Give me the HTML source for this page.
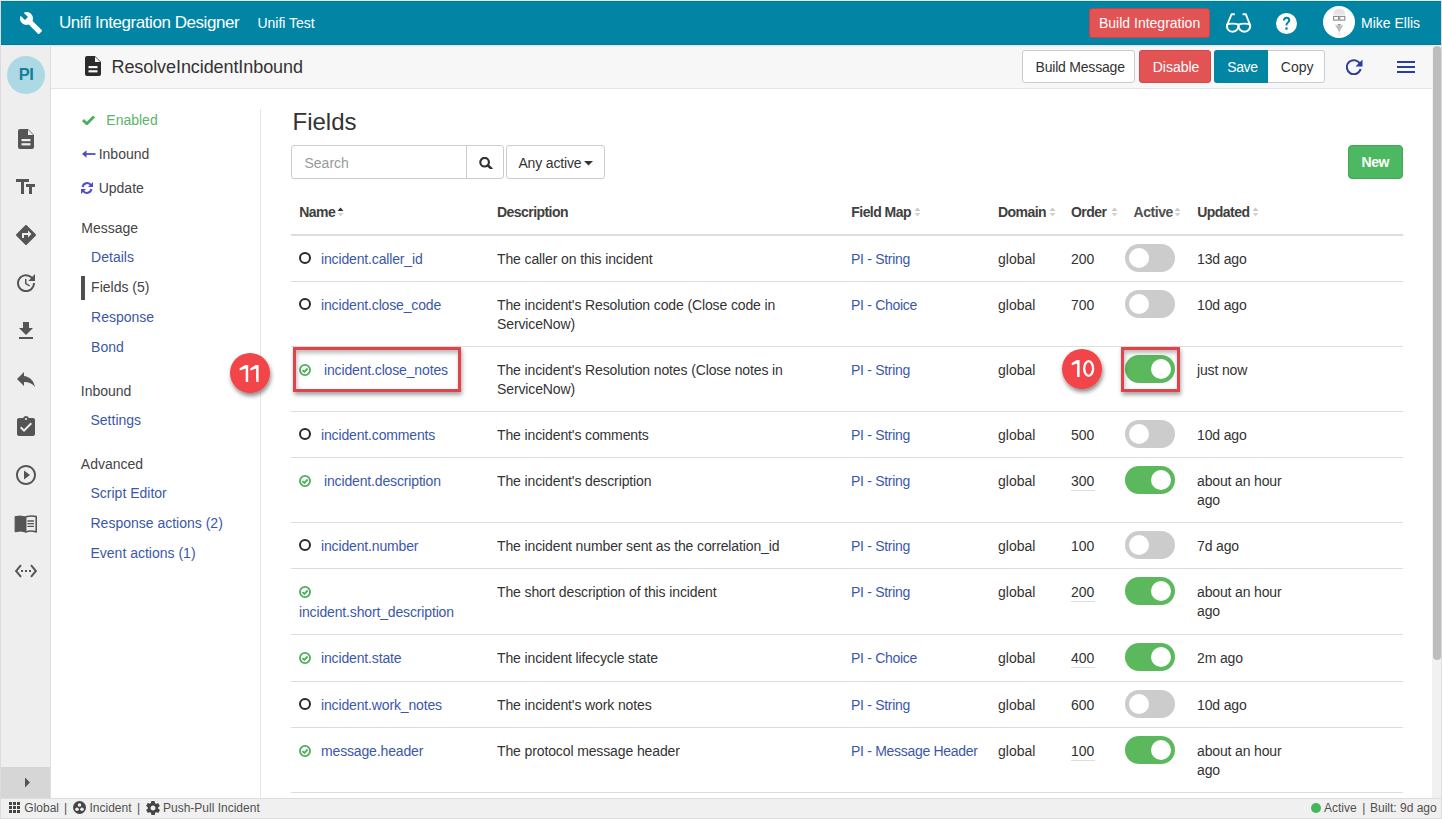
<!DOCTYPE html>
<html><head><meta charset="utf-8"><title>Unifi Integration Designer</title>
<style>
*{box-sizing:border-box;margin:0;padding:0}
html,body{width:1442px;height:819px;overflow:hidden;background:#fff;font-family:"Liberation Sans",sans-serif;color:#333}
body{position:relative}
.a{position:absolute}
.t{position:absolute;line-height:1;white-space:nowrap}
.btn{position:absolute;border-radius:3px}
.tg{position:absolute;width:50px;height:28px;border-radius:14px;background:#cccccc}
.tg.on{background:#5cb85c}
.tg i{position:absolute;top:4px;left:4px;width:20px;height:20px;border-radius:10px;background:#fff}
.tg.on i{left:26px}
.row{position:absolute;left:291px;width:1112px;border-bottom:1px solid #dddddd}
.lnk{color:#3a56a6}
.nl{color:#3f51b5}
</style></head><body>
<div class="a" style="left:0;top:0;width:1442px;height:819px;border:1px solid #dcdcdc;border-top-color:#c4f8fc"></div>
<div class="a" style="left:1px;top:1px;width:1440px;height:44px;background:#0285a5;border-top:1px solid #19708a;border-bottom:1px solid #16718b"></div>
<svg class="a" style="left:19px;top:11px" width="24" height="24" viewBox="0 0 24 24"><path fill="#fff" d="M22.7 19l-9.1-9.1c.9-2.3.4-5-1.5-6.9-2-2-5-2.4-7.4-1.3L9 6 6 9 1.6 4.7C.4 7.1.9 10.1 2.9 12.1c1.9 1.9 4.6 2.4 6.9 1.5l9.1 9.1c.4.4 1 .4 1.4 0l2.3-2.3c.5-.4.5-1.1.1-1.4z"/></svg>
<div class="t " style="left:59.0px;top:13.51px;font-size:17px;color:#fff;letter-spacing:-0.45px">Unifi Integration Designer</div>
<div class="t " style="left:257.4px;top:16.05px;font-size:14px;color:#fff;">Unifi Test</div>
<div class="btn" style="left:1089px;top:8px;width:121px;height:30px;background:#e25353;border:1px solid #c9434a"></div>
<div class="t " style="left:1099.0px;top:15.65px;font-size:14px;color:#fff;">Build Integration</div>
<svg class="a" style="left:1222px;top:10px" width="34" height="26" viewBox="0 0 34 26"><g fill="none" stroke="#fff" stroke-width="1.9" stroke-linejoin="round"><path d="M5 14.6 C7.2 13.3 14 13.3 16.3 14.6 C16.9 18.8 14.4 21.7 10.6 21.7 C6.8 21.7 4.4 18.8 5 14.6Z"/><path d="M16.7 14.6 C19 13.3 25.8 13.3 28.1 14.6 C28.7 18.8 26.2 21.7 22.4 21.7 C18.6 21.7 16.1 18.8 16.7 14.6Z"/><path d="M4.6 16.5 L9.6 4.2 L12.8 4.2"/><path d="M28.6 16.5 L23.8 4.2 L20.6 4.2"/></g></svg>
<svg class="a" style="left:1276px;top:12.5px" width="21" height="21" viewBox="0 0 21 21"><circle cx="10.5" cy="10.5" r="10.5" fill="#fff"/><path d="M6.9 7.6 Q7 3.8 10.7 3.8 Q14.3 3.9 14.3 7.2 Q14.3 9.2 12.2 10.4 Q11.4 10.9 11.4 12.6 H9.4 Q9.4 10.2 10.8 9.2 Q12.2 8.3 12.2 7.2 Q12.2 5.7 10.6 5.7 Q9 5.7 9 7.6Z" fill="#0286a3"/><rect x="9.3" y="14.4" width="2.3" height="2.3" fill="#0286a3"/></svg>
<svg class="a" style="left:1323px;top:6px" width="32" height="32" viewBox="0 0 32 32"><circle cx="16" cy="16" r="16" fill="#fff"/><path d="M10.3 8.8 Q10.5 2.4 16.2 2.4 Q22 2.4 22.1 8.8Z" fill="#e4e4e4"/><rect x="10.6" y="10.4" width="5" height="3.7" fill="none" stroke="#8a8a8a" stroke-width="1.1"/><rect x="16.8" y="10.4" width="5" height="3.7" fill="none" stroke="#8a8a8a" stroke-width="1.1"/><path d="M12 18.5 Q16.2 21 20.4 18.5 L16.2 26.5Z" fill="#bdbdbd"/><path d="M14 18 H18.4 L16.2 20.2Z" fill="#a0a0a0"/><rect x="15.2" y="26" width="2.2" height="4" fill="#ececec"/></svg>
<div class="t " style="left:1361.0px;top:16.15px;font-size:14px;color:#fff;">Mike Ellis</div>
<div class="a" style="left:1px;top:45px;width:50px;height:753px;background:#eeeeee;border-right:1px solid #dedede"></div>
<div class="a" style="left:1px;top:767px;width:49px;height:31px;background:#d6d6d6"></div>
<svg class="a" style="left:24px;top:777px" width="8" height="11" viewBox="0 0 8 11"><path d="M1 0.5 L6 5.5 L1 10.5Z" fill="#555"/></svg>
<div class="a" style="left:7px;top:56px;width:38px;height:38px;border-radius:19px;background:#acd9e3"></div>
<div class="t " style="left:18.7px;top:66.23px;font-size:16.5px;color:#137f9b;font-weight:bold;letter-spacing:-0.5px">PI</div>
<svg class="a" style="left:18px;top:129px" width="16" height="20" viewBox="0 0 16 20"><path d="M2 0 H10 L16 6 V18 Q16 20 14 20 H2 Q0 20 0 18 V2 Q0 0 2 0Z" fill="#555"/><path d="M10 0.8 V6 H15.2Z" fill="#eee"/><rect x="3.5" y="10" width="9" height="2.2" fill="#eee"/><rect x="3.5" y="14.2" width="9" height="2.2" fill="#eee"/></svg>
<svg class="a" style="left:14.2px;top:175px" width="24" height="24" viewBox="0 0 24 24"><path fill="#555" d="M15 4v3h-5v12H7V7H2V4h13zm6 8h-3v7h-3v-7h-3V9h9v3z"/></svg>
<svg class="a" style="left:14px;top:223px" width="24" height="24" viewBox="0 0 24 24"><path fill="#555" d="M21.71 11.29l-9-9c-.39-.39-1.02-.39-1.41 0l-9 9c-.39.39-.39 1.02 0 1.410l9 9c.39.39 1.02.39 1.41 0l9-9c.39-.38.39-1.01 0-1.41zM14 14.5V12h-4v3H8v-4c0-.55.45-1 1-1h5V7.5l3.5 3.5-3.5 3.5z"/></svg>
<svg class="a" style="left:14.1px;top:271px" width="24" height="24" viewBox="0 0 24 24"><path fill="#555" d="M21 10.12h-6.78l2.74-2.82c-2.73-2.7-7.15-2.8-9.88-.1-2.73 2.71-2.73 7.08 0 9.79s7.15 2.71 9.88 0C18.32 15.65 19 14.08 19 12.1h2c0 1.98-.88 4.55-2.640 6.29-3.51 3.48-9.21 3.48-12.72 0-3.5-3.47-3.53-9.11-.02-12.58s9.14-3.47 12.65 0L21 3v7.12zM12.5 8v4.25l3.5 2.08-.72 1.21L11 13V8h1.5z"/></svg>
<svg class="a" style="left:13.8px;top:318.8px" width="24" height="24" viewBox="0 0 24 24"><path fill="#555" d="M19 9h-4V3H9v6H5l7 7 7-7zM5 18v2h14v-2H5z"/></svg>
<svg class="a" style="left:14.1px;top:367.3px" width="24" height="24" viewBox="0 0 24 24"><path fill="#555" d="M10 9V5l-7 7 7 7v-4.1c5 0 8.5 1.6 11 5.1-1-5-4-10-11-11z"/></svg>
<svg class="a" style="left:14.1px;top:415.4px" width="24" height="24" viewBox="0 0 24 24"><path fill="#555" d="M19 3h-4.18C14.4 1.84 13.3 1 12 1c-1.3 0-2.4.84-2.82 2H5c-1.1 0-2 .9-2 2v14c0 1.1.9 2 2 2h14c1.1 0 2-.9 2-2V5c0-1.1-.9-2-2-2zm-7 0c.55 0 1 .45 1 1s-.45 1-1 1-1-.45-1-1 .45-1 1-1zm-2 14l-4-4 1.41-1.41L10 14.17l6.59-6.590L18 9l-8 8z"/></svg>
<svg class="a" style="left:14.3px;top:463.1px" width="24" height="24" viewBox="0 0 24 24"><path fill="#555" d="M10 16.5l6-4.5-6-4.5v9zM12 2C6.48 2 2 6.48 2 12s4.48 10 10 10 10-4.48 10-10S17.52 2 12 2zm0 18c-4.41 0-8-3.59-8-8s3.590-8 8-8 8 3.59 8 8-3.59 8-8 8z"/></svg>
<svg class="a" style="left:12px;top:510px" width="28" height="28" viewBox="0 0 28 28"><path d="M3.1 6.6 Q8.2 5.2 13.6 7 V21.9 Q8.2 20.2 3.1 21.9Z" fill="#555" stroke="#555" stroke-width="1" stroke-linejoin="round"/><path d="M13.6 7 Q19 5.2 24.2 6.6 V21.9 Q19 20.2 13.6 21.9Z" fill="none" stroke="#555" stroke-width="1.6" stroke-linejoin="round"/><path d="M15.4 11 H22 M15.4 13.7 H22 M15.4 16.4 H22" stroke="#555" stroke-width="1.3"/></svg>
<svg class="a" style="left:14px;top:559.1px" width="24" height="24" viewBox="0 0 24 24"><path fill="#555" d="M7.77 6.76L6.23 5.48.82 12l5.41 6.52 1.54-1.28L3.42 12l4.35-5.24zM7 13h2v-2H7v2zm10-2h-2v2h2v-2zm-6 2h2v-2h-2v2zm6.77-7.52l-1.54 1.28L20.58 12l-4.35 5.24 1.54 1.28L23.18 12l-5.41-6.52z"/></svg>
<div class="a" style="left:51px;top:45px;width:1382px;height:44px;background:#f7f7f7;border-bottom:1px solid #e4e4e4"></div>
<div class="a" style="left:1px;top:45px;width:1440px;height:1px;background:#cdeff7"></div>
<div class="a" style="left:51px;top:46px;width:1382px;height:1px;background:#ededed"></div>
<svg class="a" style="left:85px;top:56px" width="16" height="20" viewBox="0 0 16 20"><path d="M2 0 H10 L16 6 V18 Q16 20 14 20 H2 Q0 20 0 18 V2 Q0 0 2 0Z" fill="#2b2b2b"/><path d="M10 0.8 V6 H15.2Z" fill="#f7f7f7"/><rect x="3.5" y="10" width="9" height="2.2" fill="#f7f7f7"/><rect x="3.5" y="14.2" width="9" height="2.2" fill="#f7f7f7"/></svg>
<div class="t " style="left:111.5px;top:57.76px;font-size:18px;color:#333;letter-spacing:-0.08px">ResolveIncidentInbound</div>
<div class="btn" style="left:1022px;top:50px;width:113px;height:33px;background:#fff;border:1px solid #cccccc"></div>
<div class="t " style="left:1035.5px;top:59.85px;font-size:14px;color:#333;letter-spacing:-0.2px">Build Message</div>
<div class="btn" style="left:1139px;top:50px;width:72px;height:33px;background:#e25353;border:1px solid #d24a4f"></div>
<div class="t " style="left:1152.7px;top:59.85px;font-size:14px;color:#fff;">Disable</div>
<div class="btn" style="left:1214px;top:50px;width:111px;height:33px;background:#fff;border:1px solid #cccccc"></div>
<div class="btn" style="left:1214px;top:50px;width:54px;height:33px;background:#0286a3;border-radius:3px 0 0 3px"></div>
<div class="t " style="left:1227.3px;top:59.85px;font-size:14px;color:#fff;letter-spacing:-0.4px">Save</div>
<div class="t " style="left:1280.8px;top:59.85px;font-size:14px;color:#333;">Copy</div>
<svg class="a" style="left:1345.6px;top:59px" width="17" height="16" viewBox="0 0 17 16"><path d="M14.3 5.5 A7 7 0 1 0 14.6 10" fill="none" stroke="#2b3d9d" stroke-width="2"/><path d="M16.5 0.5 V7.5 H9.5Z" fill="#2b3d9d"/></svg>
<div class="a" style="left:1397px;top:60.5px;width:18px;height:2.2px;background:#2b3d9d"></div>
<div class="a" style="left:1397px;top:66px;width:18px;height:2.2px;background:#2b3d9d"></div>
<div class="a" style="left:1397px;top:71.3px;width:18px;height:2.2px;background:#2b3d9d"></div>
<div class="a" style="left:260px;top:109px;width:1px;height:689px;background:#e5e5e5"></div>
<svg class="a" style="left:81.5px;top:114.8px" width="13" height="10" viewBox="0 0 13 10"><path d="M1 5 L4.8 8.8 L12 1.6" fill="none" stroke="#4cae5c" stroke-width="2.8"/></svg>
<div class="t " style="left:106.3px;top:113.15px;font-size:14px;color:#5cb46a;">Enabled</div>
<svg class="a" style="left:81.5px;top:149px" width="14" height="10" viewBox="0 0 14 10"><path d="M13.5 5 H3" stroke="#4d4fc4" stroke-width="1.8"/><path d="M0 5 L4.5 1.2 V8.8Z" fill="#4d4fc4"/></svg>
<div class="t " style="left:98.7px;top:147.05px;font-size:14px;color:#444;">Inbound</div>
<svg class="a" style="left:81px;top:182px" width="12" height="12" viewBox="0 0 12 12"><path d="M1.6 5 A4.6 4.6 0 0 1 10 3.2" fill="none" stroke="#4d4fc4" stroke-width="2"/><path d="M12 0 V5 H7Z" fill="#4d4fc4"/><path d="M10.4 7 A4.6 4.6 0 0 1 2 8.8" fill="none" stroke="#4d4fc4" stroke-width="2"/><path d="M0 12 V7 H5Z" fill="#4d4fc4"/></svg>
<div class="t " style="left:98.7px;top:180.75px;font-size:14px;color:#444;">Update</div>
<div class="t " style="left:81.3px;top:221.05px;font-size:14px;color:#444;">Message</div>
<div class="t " style="left:91.1px;top:249.95px;font-size:14px;color:#3b58a8;">Details</div>
<div class="a" style="left:81px;top:276px;width:4px;height:24px;background:#505050"></div>
<div class="t " style="left:91.1px;top:279.65px;font-size:14px;color:#444;">Fields (5)</div>
<div class="t " style="left:91.1px;top:309.85px;font-size:14px;color:#3b58a8;">Response</div>
<div class="t " style="left:91.1px;top:339.75px;font-size:14px;color:#3b58a8;">Bond</div>
<div class="t " style="left:80.8px;top:384.05px;font-size:14px;color:#444;">Inbound</div>
<div class="t " style="left:90.5px;top:413.05px;font-size:14px;color:#3b58a8;">Settings</div>
<div class="t " style="left:80.8px;top:457.15px;font-size:14px;color:#444;">Advanced</div>
<div class="t " style="left:90.5px;top:486.15px;font-size:14px;color:#3b58a8;">Script Editor</div>
<div class="t " style="left:90.5px;top:516.15px;font-size:14px;color:#3b58a8;">Response actions (2)</div>
<div class="t " style="left:90.5px;top:546.15px;font-size:14px;color:#3b58a8;">Event actions (1)</div>
<div class="t " style="left:292.5px;top:109.68px;font-size:24px;color:#333;">Fields</div>
<div class="a" style="left:291px;top:145px;width:213px;height:34px;border:1px solid #cccccc;border-radius:3px;background:#fff"></div>
<div class="a" style="left:466px;top:146px;width:1px;height:32px;background:#cccccc"></div>
<div class="t " style="left:304.5px;top:155.85px;font-size:14px;color:#999;">Search</div>
<svg class="a" style="left:478.5px;top:157px" width="14" height="12" viewBox="0 0 14 12"><circle cx="5.6" cy="5.2" r="4.3" fill="none" stroke="#333" stroke-width="2.2"/><path d="M8.7 8.3 L12.4 11.6" stroke="#333" stroke-width="2.6" stroke-linecap="round"/></svg>
<div class="btn" style="left:506px;top:145px;width:99px;height:34px;border:1px solid #cccccc;background:#fff"></div>
<div class="t " style="left:518.4px;top:156.15px;font-size:14px;color:#333;letter-spacing:-0.15px">Any active</div>
<svg class="a" style="left:583.5px;top:160.5px" width="9" height="5" viewBox="0 0 9 5"><path d="M0 0 H9 L4.5 4.5Z" fill="#333"/></svg>
<div class="btn" style="left:1348px;top:145px;width:55px;height:34px;background:#4cb862;border:1px solid #45a55a;border-radius:4px"></div>
<div class="t " style="left:1361.5px;top:155.25px;font-size:14px;color:#fff;font-weight:bold;letter-spacing:-0.4px">New</div>
<div class="t " style="left:299.3px;top:205.05px;font-size:14px;color:#404040;font-weight:bold;letter-spacing:-0.55px">Name</div>
<svg class="a" style="left:337px;top:206px" width="7" height="12" viewBox="0 0 7 12"><path d="M0.5 5 L3.5 1.5 L6.5 5Z" fill="#333"/><path d="M0.5 7 L3.5 10.5 L6.5 7Z" fill="#d3d3d3"/></svg>
<div class="t " style="left:497.0px;top:205.05px;font-size:14px;color:#404040;font-weight:bold;letter-spacing:-0.55px">Description</div>
<div class="t " style="left:851.3px;top:205.05px;font-size:14px;color:#404040;font-weight:bold;letter-spacing:-0.55px">Field Map</div>
<svg class="a" style="left:914px;top:206px" width="7" height="12" viewBox="0 0 7 12"><path d="M0.5 5 L3.5 1.5 L6.5 5Z" fill="#c8c8c8"/><path d="M0.5 7 L3.5 10.5 L6.5 7Z" fill="#d3d3d3"/></svg>
<div class="t " style="left:998.0px;top:205.05px;font-size:14px;color:#404040;font-weight:bold;letter-spacing:-0.55px">Domain</div>
<svg class="a" style="left:1048.5px;top:206px" width="7" height="12" viewBox="0 0 7 12"><path d="M0.5 5 L3.5 1.5 L6.5 5Z" fill="#c8c8c8"/><path d="M0.5 7 L3.5 10.5 L6.5 7Z" fill="#d3d3d3"/></svg>
<div class="t " style="left:1071.0px;top:205.05px;font-size:14px;color:#404040;font-weight:bold;letter-spacing:-0.55px">Order</div>
<svg class="a" style="left:1110.5px;top:206px" width="7" height="12" viewBox="0 0 7 12"><path d="M0.5 5 L3.5 1.5 L6.5 5Z" fill="#c8c8c8"/><path d="M0.5 7 L3.5 10.5 L6.5 7Z" fill="#d3d3d3"/></svg>
<div class="t " style="left:1133.5px;top:205.05px;font-size:14px;color:#505050;font-weight:bold;letter-spacing:-0.45px">Active</div>
<svg class="a" style="left:1174px;top:206px" width="7" height="12" viewBox="0 0 7 12"><path d="M0.5 5 L3.5 1.5 L6.5 5Z" fill="#c8c8c8"/><path d="M0.5 7 L3.5 10.5 L6.5 7Z" fill="#d3d3d3"/></svg>
<div class="t " style="left:1197.3px;top:205.05px;font-size:14px;color:#404040;font-weight:bold;letter-spacing:-0.55px">Updated</div>
<svg class="a" style="left:1252px;top:206px" width="7" height="12" viewBox="0 0 7 12"><path d="M0.5 5 L3.5 1.5 L6.5 5Z" fill="#c8c8c8"/><path d="M0.5 7 L3.5 10.5 L6.5 7Z" fill="#d3d3d3"/></svg>
<div class="a" style="left:291px;top:234px;width:1112px;height:2px;background:#dddddd"></div>
<div class="row" style="top:236px;height:46px"></div>
<svg class="a" style="left:299px;top:252px" width="12" height="12" viewBox="0 0 12 12"><circle cx="6" cy="6" r="5" fill="none" stroke="#2a2a2a" stroke-width="2"/></svg>
<div class="t " style="left:321.0px;top:251.55px;font-size:14px;color:#3b58a8;letter-spacing:-0.15px">incident.caller_id</div>
<div class="t " style="left:497.0px;top:251.55px;font-size:14px;color:#333;letter-spacing:-0.12px">The caller on this incident</div>
<div class="t " style="left:851.0px;top:251.55px;font-size:14px;color:#3b58a8;letter-spacing:-0.3px">PI - String</div>
<div class="t " style="left:998.0px;top:251.55px;font-size:14px;color:#333;">global</div>
<div class="t " style="left:1071.0px;top:251.55px;font-size:14px;color:#333;">200</div>
<div class="tg" style="left:1125px;top:244px"><i></i></div>
<div class="t " style="left:1197.0px;top:251.55px;font-size:14px;color:#333;letter-spacing:-0.15px">13d ago</div>
<div class="row" style="top:282px;height:65px"></div>
<svg class="a" style="left:299px;top:298px" width="12" height="12" viewBox="0 0 12 12"><circle cx="6" cy="6" r="5" fill="none" stroke="#2a2a2a" stroke-width="2"/></svg>
<div class="t " style="left:321.0px;top:297.55px;font-size:14px;color:#3b58a8;letter-spacing:-0.15px">incident.close_code</div>
<div class="t " style="left:497.0px;top:297.55px;font-size:14px;color:#333;letter-spacing:-0.12px">The incident's Resolution code (Close code in</div>
<div class="t " style="left:497.0px;top:317.05px;font-size:14px;color:#333;letter-spacing:-0.12px">ServiceNow)</div>
<div class="t " style="left:851.0px;top:297.55px;font-size:14px;color:#3b58a8;letter-spacing:-0.3px">PI - Choice</div>
<div class="t " style="left:998.0px;top:297.55px;font-size:14px;color:#333;">global</div>
<div class="t " style="left:1071.0px;top:297.55px;font-size:14px;color:#333;">700</div>
<div class="tg" style="left:1125px;top:290px"><i></i></div>
<div class="t " style="left:1197.0px;top:297.55px;font-size:14px;color:#333;letter-spacing:-0.15px">10d ago</div>
<div class="row" style="top:347px;height:65px"></div>
<svg class="a" style="left:299px;top:364px" width="12" height="12" viewBox="0 0 12 12"><circle cx="6" cy="6" r="5.05" fill="none" stroke="#4cae5c" stroke-width="1.8"/><path d="M3.4 6.1 L5.3 7.9 L8.7 4.5" fill="none" stroke="#4cae5c" stroke-width="1.8"/></svg>
<div class="t " style="left:324.0px;top:362.55px;font-size:14px;color:#3b58a8;letter-spacing:-0.15px">incident.close_notes</div>
<div class="t " style="left:497.0px;top:362.55px;font-size:14px;color:#333;letter-spacing:-0.12px">The incident's Resolution notes (Close notes in</div>
<div class="t " style="left:497.0px;top:382.05px;font-size:14px;color:#333;letter-spacing:-0.12px">ServiceNow)</div>
<div class="t " style="left:851.0px;top:362.55px;font-size:14px;color:#3b58a8;letter-spacing:-0.3px">PI - String</div>
<div class="t " style="left:998.0px;top:362.55px;font-size:14px;color:#333;">global</div>
<div class="tg on" style="left:1125px;top:355px"><i></i></div>
<div class="t " style="left:1197.0px;top:362.55px;font-size:14px;color:#333;letter-spacing:-0.15px">just now</div>
<div class="row" style="top:412px;height:46px"></div>
<svg class="a" style="left:299px;top:428px" width="12" height="12" viewBox="0 0 12 12"><circle cx="6" cy="6" r="5" fill="none" stroke="#2a2a2a" stroke-width="2"/></svg>
<div class="t " style="left:321.0px;top:427.55px;font-size:14px;color:#3b58a8;letter-spacing:-0.15px">incident.comments</div>
<div class="t " style="left:497.0px;top:427.55px;font-size:14px;color:#333;letter-spacing:-0.12px">The incident's comments</div>
<div class="t " style="left:851.0px;top:427.55px;font-size:14px;color:#3b58a8;letter-spacing:-0.3px">PI - String</div>
<div class="t " style="left:998.0px;top:427.55px;font-size:14px;color:#333;">global</div>
<div class="t " style="left:1071.0px;top:427.55px;font-size:14px;color:#333;">500</div>
<div class="tg" style="left:1125px;top:420px"><i></i></div>
<div class="t " style="left:1197.0px;top:427.55px;font-size:14px;color:#333;letter-spacing:-0.15px">10d ago</div>
<div class="row" style="top:458px;height:65px"></div>
<svg class="a" style="left:299px;top:475px" width="12" height="12" viewBox="0 0 12 12"><circle cx="6" cy="6" r="5.05" fill="none" stroke="#4cae5c" stroke-width="1.8"/><path d="M3.4 6.1 L5.3 7.9 L8.7 4.5" fill="none" stroke="#4cae5c" stroke-width="1.8"/></svg>
<div class="t " style="left:324.0px;top:473.55px;font-size:14px;color:#3b58a8;letter-spacing:-0.15px">incident.description</div>
<div class="t " style="left:497.0px;top:473.55px;font-size:14px;color:#333;letter-spacing:-0.12px">The incident's description</div>
<div class="t " style="left:851.0px;top:473.55px;font-size:14px;color:#3b58a8;letter-spacing:-0.3px">PI - String</div>
<div class="t " style="left:998.0px;top:473.55px;font-size:14px;color:#333;">global</div>
<div class="t " style="left:1071.0px;top:473.55px;font-size:14px;color:#333;">300</div>
<div class="a" style="left:1071px;top:490.4px;width:24px;height:1px;background:#dddddd"></div>
<div class="tg on" style="left:1125px;top:466px"><i></i></div>
<div class="t " style="left:1197.0px;top:473.55px;font-size:14px;color:#333;letter-spacing:-0.15px">about an hour</div>
<div class="t " style="left:1197.0px;top:493.05px;font-size:14px;color:#333;letter-spacing:-0.15px">ago</div>
<div class="row" style="top:523px;height:46px"></div>
<svg class="a" style="left:299px;top:539px" width="12" height="12" viewBox="0 0 12 12"><circle cx="6" cy="6" r="5" fill="none" stroke="#2a2a2a" stroke-width="2"/></svg>
<div class="t " style="left:321.0px;top:538.55px;font-size:14px;color:#3b58a8;letter-spacing:-0.15px">incident.number</div>
<div class="t " style="left:497.0px;top:538.55px;font-size:14px;color:#333;letter-spacing:-0.12px">The incident number sent as the correlation_id</div>
<div class="t " style="left:851.0px;top:538.55px;font-size:14px;color:#3b58a8;letter-spacing:-0.3px">PI - String</div>
<div class="t " style="left:998.0px;top:538.55px;font-size:14px;color:#333;">global</div>
<div class="t " style="left:1071.0px;top:538.55px;font-size:14px;color:#333;">100</div>
<div class="tg" style="left:1125px;top:531px"><i></i></div>
<div class="t " style="left:1197.0px;top:538.55px;font-size:14px;color:#333;letter-spacing:-0.15px">7d ago</div>
<div class="row" style="top:569px;height:66px"></div>
<svg class="a" style="left:299px;top:586px" width="12" height="12" viewBox="0 0 12 12"><circle cx="6" cy="6" r="5.05" fill="none" stroke="#4cae5c" stroke-width="1.8"/><path d="M3.4 6.1 L5.3 7.9 L8.7 4.5" fill="none" stroke="#4cae5c" stroke-width="1.8"/></svg>
<div class="t " style="left:299.0px;top:605.35px;font-size:14px;color:#3b58a8;letter-spacing:-0.15px">incident.short_description</div>
<div class="t " style="left:497.0px;top:584.55px;font-size:14px;color:#333;letter-spacing:-0.12px">The short description of this incident</div>
<div class="t " style="left:851.0px;top:584.55px;font-size:14px;color:#3b58a8;letter-spacing:-0.3px">PI - String</div>
<div class="t " style="left:998.0px;top:584.55px;font-size:14px;color:#333;">global</div>
<div class="t " style="left:1071.0px;top:584.55px;font-size:14px;color:#333;">200</div>
<div class="a" style="left:1071px;top:601.4px;width:24px;height:1px;background:#dddddd"></div>
<div class="tg on" style="left:1125px;top:577px"><i></i></div>
<div class="t " style="left:1197.0px;top:584.55px;font-size:14px;color:#333;letter-spacing:-0.15px">about an hour</div>
<div class="t " style="left:1197.0px;top:604.05px;font-size:14px;color:#333;letter-spacing:-0.15px">ago</div>
<div class="row" style="top:635px;height:47px"></div>
<svg class="a" style="left:299px;top:652px" width="12" height="12" viewBox="0 0 12 12"><circle cx="6" cy="6" r="5.05" fill="none" stroke="#4cae5c" stroke-width="1.8"/><path d="M3.4 6.1 L5.3 7.9 L8.7 4.5" fill="none" stroke="#4cae5c" stroke-width="1.8"/></svg>
<div class="t " style="left:321.0px;top:650.55px;font-size:14px;color:#3b58a8;letter-spacing:-0.15px">incident.state</div>
<div class="t " style="left:497.0px;top:650.55px;font-size:14px;color:#333;letter-spacing:-0.12px">The incident lifecycle state</div>
<div class="t " style="left:851.0px;top:650.55px;font-size:14px;color:#3b58a8;letter-spacing:-0.3px">PI - Choice</div>
<div class="t " style="left:998.0px;top:650.55px;font-size:14px;color:#333;">global</div>
<div class="t " style="left:1071.0px;top:650.55px;font-size:14px;color:#333;">400</div>
<div class="a" style="left:1071px;top:667.4px;width:24px;height:1px;background:#dddddd"></div>
<div class="tg on" style="left:1125px;top:643px"><i></i></div>
<div class="t " style="left:1197.0px;top:650.55px;font-size:14px;color:#333;letter-spacing:-0.15px">2m ago</div>
<div class="row" style="top:682px;height:46px"></div>
<svg class="a" style="left:299px;top:698px" width="12" height="12" viewBox="0 0 12 12"><circle cx="6" cy="6" r="5" fill="none" stroke="#2a2a2a" stroke-width="2"/></svg>
<div class="t " style="left:321.0px;top:697.55px;font-size:14px;color:#3b58a8;letter-spacing:-0.15px">incident.work_notes</div>
<div class="t " style="left:497.0px;top:697.55px;font-size:14px;color:#333;letter-spacing:-0.12px">The incident's work notes</div>
<div class="t " style="left:851.0px;top:697.55px;font-size:14px;color:#3b58a8;letter-spacing:-0.3px">PI - String</div>
<div class="t " style="left:998.0px;top:697.55px;font-size:14px;color:#333;">global</div>
<div class="t " style="left:1071.0px;top:697.55px;font-size:14px;color:#333;">600</div>
<div class="tg" style="left:1125px;top:690px"><i></i></div>
<div class="t " style="left:1197.0px;top:697.55px;font-size:14px;color:#333;letter-spacing:-0.15px">10d ago</div>
<div class="row" style="top:728px;height:65px"></div>
<svg class="a" style="left:299px;top:745px" width="12" height="12" viewBox="0 0 12 12"><circle cx="6" cy="6" r="5.05" fill="none" stroke="#4cae5c" stroke-width="1.8"/><path d="M3.4 6.1 L5.3 7.9 L8.7 4.5" fill="none" stroke="#4cae5c" stroke-width="1.8"/></svg>
<div class="t " style="left:321.0px;top:743.55px;font-size:14px;color:#3b58a8;letter-spacing:-0.15px">message.header</div>
<div class="t " style="left:497.0px;top:743.55px;font-size:14px;color:#333;letter-spacing:-0.12px">The protocol message header</div>
<div class="t " style="left:851.0px;top:743.55px;font-size:14px;color:#3b58a8;letter-spacing:-0.3px">PI - Message Header</div>
<div class="t " style="left:998.0px;top:743.55px;font-size:14px;color:#333;">global</div>
<div class="t " style="left:1071.0px;top:743.55px;font-size:14px;color:#333;">100</div>
<div class="a" style="left:1071px;top:760.4px;width:24px;height:1px;background:#dddddd"></div>
<div class="tg on" style="left:1125px;top:736px"><i></i></div>
<div class="t " style="left:1197.0px;top:743.55px;font-size:14px;color:#333;letter-spacing:-0.15px">about an hour</div>
<div class="t " style="left:1197.0px;top:763.05px;font-size:14px;color:#333;letter-spacing:-0.15px">ago</div>
<div class="a" style="left:293px;top:347px;width:168px;height:45px;border:3px solid #e2424a;box-shadow:1px 3px 4px rgba(0,0,0,0.35), inset 1px 3px 4px rgba(0,0,0,0.28)"></div>
<div class="a" style="left:1121px;top:347px;width:59px;height:45px;border:3px solid #e2424a;box-shadow:1px 3px 4px rgba(0,0,0,0.35), inset 1px 3px 4px rgba(0,0,0,0.28)"></div>
<svg class="a" style="left:230px;top:353px;overflow:visible" width="40" height="40" viewBox="0 0 40 40"><defs><filter id="sh" x="-30%" y="-30%" width="160%" height="160%"><feDropShadow dx="1" dy="3" stdDeviation="2" flood-color="#000" flood-opacity="0.45"/></filter></defs><circle cx="20" cy="20" r="20" fill="#f24448" filter="url(#sh)"/><path fill="#fff" d="M15.7 12 H18.2 V29.1 H15.7 V15.4 L9.7 17.4 V15.3 L15.3 12Z M26.1 12 H28.6 V29.1 H26.1 V15.4 L20.4 17.4 V15.3 L25.7 12Z"/></svg>
<svg class="a" style="left:1062px;top:349px;overflow:visible" width="40" height="40" viewBox="0 0 40 40"><circle cx="20" cy="20" r="20" fill="#f24448" filter="url(#sh)"/><path fill="#fff" d="M15.1 11 H17.6 V27.9 H15.1 V14.4 L9.8 16.2 V14.1 L14.8 11Z"/><ellipse cx="26.65" cy="19.5" rx="4.45" ry="7.3" fill="none" stroke="#fff" stroke-width="2.3"/></svg>
<div class="a" style="left:1432px;top:45px;width:9px;height:753px;background:#f1f1f1"></div>
<div class="a" style="left:1433px;top:46px;width:8px;height:614px;background:#bdbdbd;border-radius:4px"></div>
<div class="a" style="left:1px;top:798px;width:1440px;height:20px;background:#f0f0f0;border-top:1px solid #dedede"></div>
<svg class="a" style="left:9px;top:802px" width="11" height="11" viewBox="0 0 11 11"><g fill="#444"><rect x="0" y="0" width="3" height="3"/><rect x="4" y="0" width="3" height="3"/><rect x="8" y="0" width="3" height="3"/><rect x="0" y="4" width="3" height="3"/><rect x="4" y="4" width="3" height="3"/><rect x="8" y="4" width="3" height="3"/><rect x="0" y="8" width="3" height="3"/><rect x="4" y="8" width="3" height="3"/><rect x="8" y="8" width="3" height="3"/></g></svg>
<div class="t " style="left:24.3px;top:801.84px;font-size:12px;color:#505050;">Global</div>
<div class="t " style="left:64.0px;top:801.84px;font-size:12px;color:#505050;">|</div>
<svg class="a" style="left:73px;top:801px" width="13" height="13" viewBox="0 0 13 13"><circle cx="6.5" cy="6.5" r="6.5" fill="#444"/><circle cx="6.5" cy="4" r="1.8" fill="#f0f0f0"/><circle cx="4" cy="8.3" r="1.8" fill="#f0f0f0"/><circle cx="9" cy="8.3" r="1.8" fill="#f0f0f0"/></svg>
<div class="t " style="left:89.5px;top:801.84px;font-size:12px;color:#505050;">Incident</div>
<div class="t " style="left:137.0px;top:801.84px;font-size:12px;color:#505050;">|</div>
<svg class="a" style="left:145.5px;top:800.5px" width="14" height="14" viewBox="2 2 20 20"><path fill="#444" d="M19.4 13c.04-.3.1-.7.1-1s-.03-.7-.1-1l2.1-1.6c.2-.2.2-.4.1-.6l-2-3.5c-.1-.2-.4-.3-.6-.2l-2.5 1c-.5-.4-1.1-.7-1.7-1l-.4-2.6C14.4 2.2 14.2 2 14 2h-4c-.2 0-.5.2-.5.4l-.4 2.6c-.6.3-1.2.6-1.7 1l-2.5-1c-.2-.1-.5 0-.6.2l-2 3.5c-.1.2-.1.5.1.6L4.6 11c-.1.3-.1.7-.1 1s0 .7.1 1l-2.1 1.6c-.2.2-.2.4-.1.6l2 3.5c.1.2.4.3.6.2l2.5-1c.5.4 1.1.7 1.7 1l.4 2.6c0 .2.3.4.5.4h4c.2 0 .5-.2.5-.4l.4-2.6c.6-.3 1.2-.6 1.7-1l2.5 1c.2.1.5 0 .6-.2l2-3.5c.1-.2.1-.5-.1-.6L19.4 13zM12 15.5c-1.9 0-3.5-1.6-3.5-3.5s1.6-3.5 3.5-3.5 3.5 1.6 3.5 3.5-1.6 3.5-3.5 3.5z"/></svg>
<div class="t " style="left:163.0px;top:801.84px;font-size:12px;color:#505050;">Push-Pull Incident</div>
<div class="a" style="left:1311px;top:803px;width:10px;height:10px;border-radius:5px;background:#44b75a"></div>
<div class="t " style="left:1324.0px;top:801.84px;font-size:12px;color:#505050;">Active</div>
<div class="t " style="left:1362.2px;top:801.84px;font-size:12px;color:#505050;">|</div>
<div class="t " style="left:1370.0px;top:801.84px;font-size:12px;color:#505050;">Built: 9d ago</div>
</body></html>
